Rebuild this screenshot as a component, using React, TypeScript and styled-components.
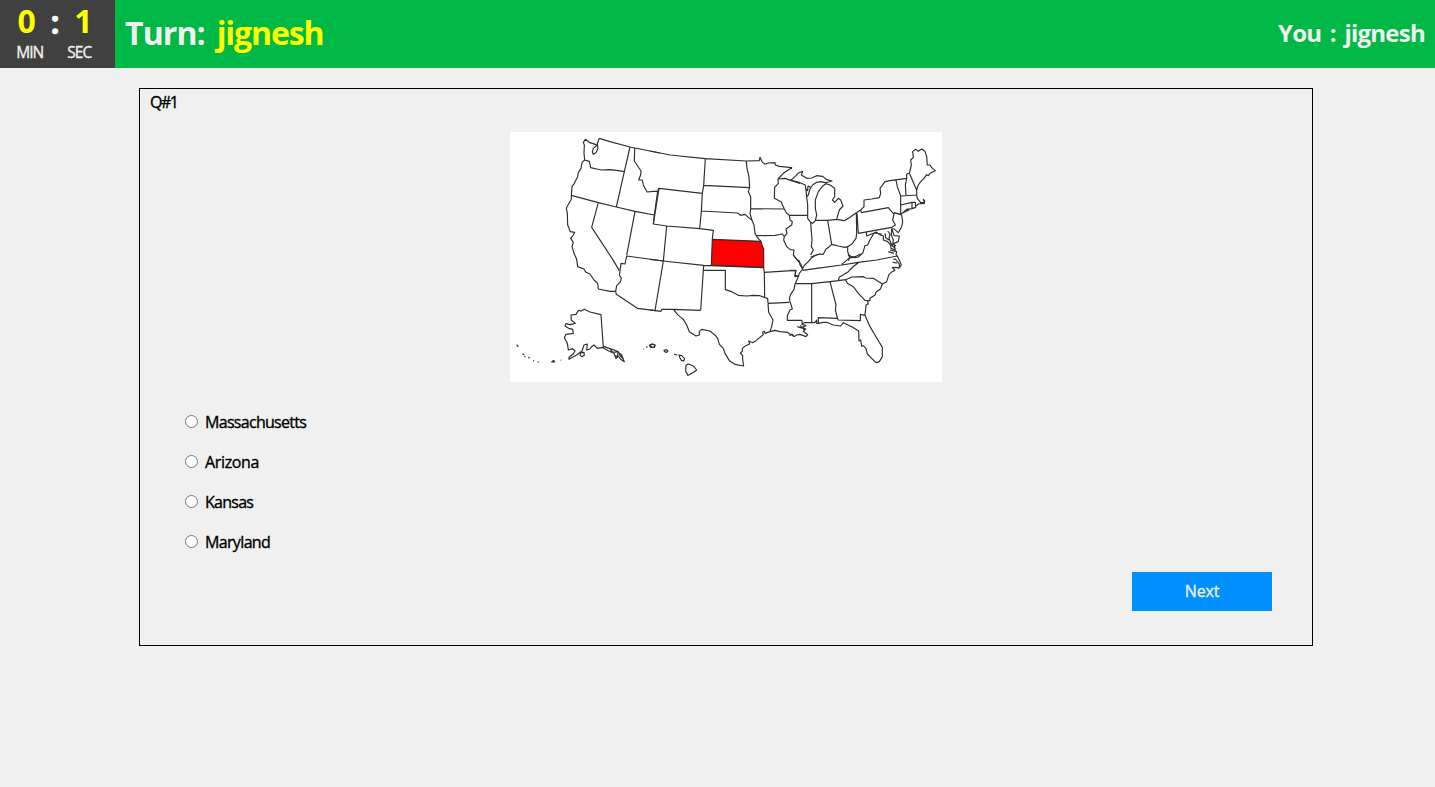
import React from "react";
import styled, { createGlobalStyle } from "styled-components";

const GlobalStyle = createGlobalStyle`
  * { box-sizing: border-box; }
  body {
    margin: 0;
    background: #f0f0f0;
    color: #000;
    font-family: "Trebuchet MS", "Open Sans", sans-serif;
    font-size: 16px;
    line-height: 20px;
  }
`;

const Header = styled.header`
  display: flex;
  height: 68px;
  background: #00b845;
  color: #f0f0f0;
`;

const Timer = styled.div`
  display: flex;
  width: 115px;
  padding: 0 14px 0 9px;
  justify-content: space-between;
  background: #404040;
`;

const TimerUnit = styled.div`
  display: flex;
  flex-direction: column;
  align-items: center;
  width: 42px;
`;

const TimerValue = styled.span<{ $shift?: number }>`
  height: 42px;
  font-size: 32px;
  font-weight: 700;
  line-height: 41px;
  color: #ff0;
  padding-left: ${(p) => p.$shift ?? 0}px;
  margin-right: ${(p) => (p.$shift ? 0 : 6)}px;
`;

const TimerColon = styled.span`
  font-size: 32px;
  font-weight: 700;
  line-height: 44px;
  color: #fff;
  -webkit-text-stroke: 0.6px currentColor;
`;

const TimerLabel = styled.span<{ $nudge?: number }>`
  font-size: 15.5px;
  letter-spacing: -1px;
  padding-right: ${(p) => p.$nudge ?? 0}px;
  -webkit-text-stroke: 0.35px currentColor;
`;

const Turn = styled.h1`
  flex: 1;
  margin: 0;
  padding-left: 10px;
  font-size: 32px;
  font-weight: 700;
  line-height: 65px;
  letter-spacing: -0.9px;
  word-spacing: 4.5px;
`;

const Player = styled.span`
  color: #ff0;
  letter-spacing: -1.1px;
`;

const You = styled.h2`
  margin: 0;
  padding-right: 10px;
  font-size: 24px;
  font-weight: 700;
  line-height: 66px;
  letter-spacing: -0.75px;
  word-spacing: 3px;
`;

const Card = styled.main`
  display: flex;
  flex-direction: column;
  width: 1174px;
  height: 558px;
  margin: 20px 0 0 139px;
  padding: 3px 40px 34px 10px;
  border: 1px solid #000;
`;

const Question = styled.div`
  height: 40px;
  letter-spacing: -1.5px;
  -webkit-text-stroke: 0.35px currentColor;
`;

const MapFrame = styled.svg`
  display: block;
  width: 432px;
  height: 250px;
  margin-left: 360px;
  background: #fff;
`;

const Options = styled.div`
  display: flex;
  flex-direction: column;
  gap: 20px;
  margin: 30px 0 0 35px;
`;

const Option = styled.label`
  display: flex;
  align-items: center;
  height: 20px;
`;

const Radio = styled.input`
  width: 13px;
  height: 13px;
  margin: 0 7px 2px 0;
`;

const OptionText = styled.span<{ $tracking: number }>`
  letter-spacing: ${(p) => p.$tracking}px;
  -webkit-text-stroke: 0.35px currentColor;
`;

const NextButton = styled.button`
  align-self: flex-end;
  width: 140px;
  height: 39px;
  margin-top: 20px;
  padding: 0 0 1px;
  border: 0;
  background: #0091ff;
  color: #f0f0f0;
  font: inherit;
  letter-spacing: -0.2px;
  -webkit-text-stroke: 0.35px currentColor;
`;

const regions = [
  {
    name: "northwest",
    at: [0, 0],
    d: `M268 25 300 35 360 51 374 54 450 69
M268 25 262 40 264 55 258 68 250 73 247 66 250 55 260 47 258 44 238 37 226 28 220 37 223 45 222 70 224 90 216 97 213 115 205 127 203 140 193 160 186 170 184 196 184 208 169 234 172 250 173 285 181 305 194 307 190 315 182 325 190 337 186 350 192 370 200 388 203 410 222 417 228 427 240 432 252 450 263 460 265 477 300 484 317 484
M224 90 238 94 242 113 260 117 275 120 300 119 325 122 343 125
M360 51 343 125 319 231M184 196 265 218 319 231 375 244 433 255
M265 218 245 292 308 388 328 422
M374 54 373 93 393 123 392 135 386 150 397 150 400 165 411 186 430 184 443 184
M447 174 443 184 433 255 430 282M375 244 350 376`,
  },
  {
    name: "southwest and Alaska",
    at: [0, 375],
    d: `M350 3 345 27 333 25 330 48 328 60 334 70 330 82 320 92 317 109 319 118 382 160 437 167M350 3 460 18
M223 163 240 171 273 179 280 277 262 280 252 270 245 275 240 282 230 285 232 267 222 270 216 288 200 300 177 313 177 307 190 297 195 288 188 281 175 285 172 265 163 248 168 238 190 235 188 223 176 220 165 213 168 206 180 209 196 205 184 195 183 180 198 178 205 166 214 168Z
M212 293 222 292 223 301 216 305 210 301ZM280 274 300 281 320 288 335 300 343 320 332 313 325 303 318 311 312 295 295 287 280 279M300 281 308 292 325 290 322 305 312 300M327 298 340 312
M20 269 25 276M37 296 43 299M43 304 46 306M55 307 59 310M70 316 72 318M83 320 86 322M125 321 131 316 134 321ZM152 315 154 316M399 281 401 282M408 277 413 275M418 271 426 267 435 270 433 277 422 277Z`,
  },
  {
    name: "northern plains",
    at: [420, 0],
    d: `M0 63 60 75 166 86 289 93 328 92 330 82 336 95 345 103 355 99 375 98 376 105 388 109 425 113 400 130 384 147
M166 86 161 166 157 190 154 243 149 296M27 175 157 190M27 175 10 282 50 288 149 296 190 301 187 328M161 166 299 173
M154 243 262 249 272 256 285 253 306 271M289 93 291 115 297 140 299 173 295 185 302 200 302 237 300 250 306 271 312 285 315 310 322 322 333 334
M302 236 403 237M318 317 375 316 397 312 403 320
M384 147 385 160 374 172 373 205 393 215 403 237 410 250 418 256 420 270 427 275 425 285 408 297 411 310 403 320 401 330 410 350 421 359 432 360 430 375 440 388 453 403 458 417
M384 147 405 145 422 151 450 160M418 256 474 256M50 288 40 393`,
  },
  {
    name: "southern plains and Hawaii",
    at: [420, 375],
    d: `M0 165 15 167 33 169 35 163 70 163 152 166M15 167 40 18M0 13 40 18 161 31 341 38M161 31 152 166
M161 46 226 46 226 104 245 110 265 121 290 123 310 121 330 122 345 128M341 38 343 52 344 128 353 130 354 145M343 52 437 46 435 65 447 62M354 145 418 142
M354 145 356 172 369 195 365 215 360 230 345 235 343 229 338 232 340 239 335 243 318 257 308 263 296 258 299 267 287 272 277 280 277 289 271 294 278 302 278 315 281 333 255 328 238 317 225 295 220 280 208 268 203 250 196 241 180 228 155 223 148 229 148 240 138 243 118 230 110 210 100 193 83 179 70 163
M360 230 375 226 390 230 412 232 420 238 427 238 432 245
M1 270 8 267 15 271 13 277 5 277ZM42 286 49 284 54 288 50 292 44 290ZM72 297 82 301M87 300 95 302 104 311 101 318 94 316 90 309ZM108 331 115 327 130 333 140 345 131 352 118 359 114 361 107 349Z`,
  },
  {
    name: "great lakes and northeast",
    at: [840, 0],
    d: `M0 114 6 116M2 151 18 137 24 130 38 124 34 135 50 145 65 144 80 137 98 139 110 149 126 153 115 156 105 158 92 155 80 157 68 165 60 177 55 195 50 200 46 165 30 158 0 150
M46 175 53 182 54 168 62 172M50 200 53 225 53 265 60 275 68 280 76 272 80 255 76 235 76 210 85 185 98 168 108 161 120 165 134 175 134 200 127 210 134 217 145 205 152 210 159 228 148 240 140 268
M76 271 113 271 140 268 163 272 180 262 199 248M62 278 66 330 64 350 70 360 62 375M113 271 125 343
M199 248 200 310 198 325 185 343 173 350 165 352 145 348 125 343 118 350 108 357 100 373 90 372 70 378 62 382
M201 250 205 310M199 248 212 240 214 248 295 233 305 245 312 252 308 270 316 285 305 292 205 310
M212 240 222 230 222 210 245 207 268 203 272 190 270 175 285 155 300 152 350 145 350 133 356 130
M318 150 322 170 332 198 332 253 312 248M350 145 346 165 348 195M332 198 380 195M358 130 380 180 380 195
M358 130 364 105 362 90 370 82 368 65 376 58 385 64 395 57 405 64 410 80 412 105 420 105 425 113 436 122 420 130 415 137 410 134 402 145 392 155 385 165 380 180
M380 195 382 205 392 218 403 217 400 208 404 212 403 220 385 222 376 230M332 225 366 217 376 217 377 232 366 236 350 238 332 253M366 217 366 236M332 252 345 245 358 240M332 198 332 224
M312 248 335 255 338 275 335 290 325 308 310 295
M229 307 230 318 252 309 258 306 270 314 280 318 280 330 293 335 302 345 303 355 316 360 312 340 325 335 328 318 312 317 305 292M293 303 300 312 297 325 305 345 315 355M305 297 304 316 310 330 308 343 318 347M285 310 287 323 297 330
M252 309 240 330 233 345 225 347 218 370 195 380 187 383 180 382 173 365 173 350M275 312 253 309M180 382 175 392M300 360 320 365 318 373 322 378M295 365 312 370`,
  },
  {
    name: "southeast",
    at: [840, 375],
    d: `M10 0 20 13 28 18 30 30 38 42 28 55 25 65 15 88 12 103 2 118 -2 130 0 140 7 162 0 165 -8 182 -8 196 36 196M0 46 18 47 15 62 25 65M38 40 44 30 55 20 65 8 78 0 90 -3
M18 86 65 86 120 80 145 77 167 74M38 46 80 40 155 30 205 22 260 15 322 3M145 77 148 66 155 62 175 50 188 36 205 23M155 28 170 16 180 7 175 0 183 4 195 8 205 6 215 -3
M65 86 65 203M120 80 138 150 136 165 144 195M85 205 85 188 142 190M144 195 211 197 211 178 226 181
M167 74 172 85 190 95 205 115 225 136 240 137M167 74 185 66 220 65 227 69 250 70 277 87
M322 3 330 20 334 30 328 38 328 27 316 12 310 13M308 22 322 24M328 40 318 37 307 38 315 46 304 52 297 58 290 80 277 87 272 101 258 112 255 120 240 130 240 137 232 138 235 147 228 150 225 181 240 215 262 252 277 277 277 305 268 320 258 323 245 310 232 297 228 280 220 272 215 274 212 255 207 258 206 228 188 217 160 203 152 213 130 210 110 202 100 202 85 205 80 205 80 195 75 202 65 203 42 203 36 208 36 196
M12 245 20 240 30 238 48 245 53 239 40 229 47 222 37 217 48 212 36 208M22 215 40 220 30 211M34 217 44 224M-2 241 5 239 12 245`,
  },
];

const UsaMap = () => (
  <MapFrame viewBox="0 6 1296 750" role="img" aria-label="Map of the United States">
    <path d="M607 328 753 334 756 345 761 357 761 412 604 405Z" fill="#f00" />
    <g fill="none" stroke="#2e2e2e" strokeWidth="3.5" strokeLinejoin="round">
      {regions.map((r) => (
        <path key={r.name} d={r.d} transform={`translate(${r.at[0]} ${r.at[1]})`} />
      ))}
      <path d="M607 328 753 334 756 345 761 357 761 412 604 405Z" />
    </g>
  </MapFrame>
);

const answers = [
  { text: "Massachusetts", tracking: -0.7 },
  { text: "Arizona", tracking: -0.35 },
  { text: "Kansas", tracking: -0.75 },
  { text: "Maryland", tracking: -0.65 },
];

export default function App() {
  return (
    <>
      <GlobalStyle />
      <Header>
        <Timer>
          <TimerUnit>
            <TimerValue>0</TimerValue>
            <TimerLabel>MIN</TimerLabel>
          </TimerUnit>
          <TimerColon>:</TimerColon>
          <TimerUnit>
            <TimerValue $shift={6}>1</TimerValue>
            <TimerLabel $nudge={2}>SEC</TimerLabel>
          </TimerUnit>
        </Timer>
        <Turn>
          Turn: <Player>jignesh</Player>
        </Turn>
        <You>You : jignesh</You>
      </Header>
      <Card>
        <Question>Q#1</Question>
        <UsaMap />
        <Options>
          {answers.map((a) => (
            <Option key={a.text}>
              <Radio type="radio" name="answer" />
              <OptionText $tracking={a.tracking}>{a.text}</OptionText>
            </Option>
          ))}
        </Options>
        <NextButton>Next</NextButton>
      </Card>
    </>
  );
}
